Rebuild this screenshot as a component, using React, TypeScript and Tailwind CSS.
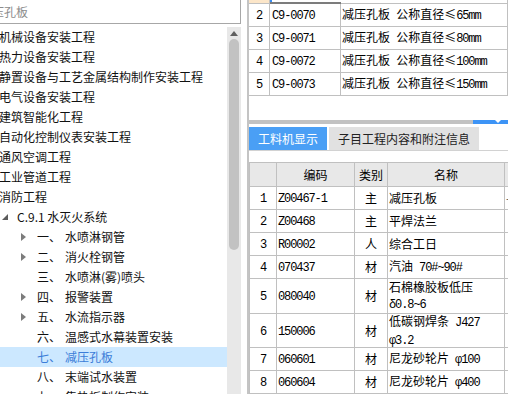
import React from 'react';

type TreeItem = { level: 0 | 1 | 2; num?: string; text: string; arrow?: boolean; active?: boolean };

const TREE: TreeItem[] = [
  { level: 0, text: '机械设备安装工程' },
  { level: 0, text: '热力设备安装工程' },
  { level: 0, text: '静置设备与工艺金属结构制作安装工程' },
  { level: 0, text: '电气设备安装工程' },
  { level: 0, text: '建筑智能化工程' },
  { level: 0, text: '自动化控制仪表安装工程' },
  { level: 0, text: '通风空调工程' },
  { level: 0, text: '工业管道工程' },
  { level: 0, text: '消防工程' },
  { level: 1, text: 'C.9.1 水灭火系统' },
  { level: 2, num: '一、', text: '水喷淋钢管', arrow: true },
  { level: 2, num: '二、', text: '消火栓钢管', arrow: true },
  { level: 2, num: '三、', text: '水喷淋(雾)喷头' },
  { level: 2, num: '四、', text: '报警装置', arrow: true },
  { level: 2, num: '五、', text: '水流指示器', arrow: true },
  { level: 2, num: '六、', text: '温感式水幕装置安装' },
  { level: 2, num: '七、', text: '减压孔板', active: true },
  { level: 2, num: '八、', text: '末端试水装置' },
  { level: 2, num: '九、', text: '集热板制作安装' },
];

const TOP_ROWS = [
  { n: '2', code: 'C9-0070', name: '减压孔板 公称直径≤65mm' },
  { n: '3', code: 'C9-0071', name: '减压孔板 公称直径≤80mm' },
  { n: '4', code: 'C9-0072', name: '减压孔板 公称直径≤100mm' },
  { n: '5', code: 'C9-0073', name: '减压孔板 公称直径≤150mm' },
];

const MAT_ROWS = [
  { n: '1', code: 'Z00467-1', type: '主', name: ['减压孔板'], h: 'h-[23px]', extra: '-' },
  { n: '2', code: 'Z00468', type: '主', name: ['平焊法兰'], h: 'h-[23px]' },
  { n: '3', code: 'R00002', type: '人', name: ['综合工日'], h: 'h-[23px]' },
  { n: '4', code: '070437', type: '材', name: ['汽油 70#~90#'], h: 'h-[23px]' },
  { n: '5', code: '080040', type: '材', name: ['石棉橡胶板低压', 'δ0.8~6'], h: 'h-[35px]' },
  { n: '6', code: '150006', type: '材', name: ['低碳钢焊条 J427', 'φ3.2'], h: 'h-[34px]' },
  { n: '7', code: '060601', type: '材', name: ['尼龙砂轮片 φ100'], h: 'h-[23px]' },
  { n: '8', code: '060604', type: '材', name: ['尼龙砂轮片 φ400'], h: 'h-[23px]' },
];

// ascii runs get the narrow mono face, like the half-width song glyphs
function Mixed({ text }: { text: string }) {
  const parts = text.split(/([\x20-\x7E\u03b4\u03c6]+)/);
  return (
    <span className="whitespace-pre">
      {parts.map((p, i) =>
        /^[\x20-\x7E\u03b4\u03c6]+$/.test(p) ? (
          <span key={i} className="font-['Liberation_Mono',monospace] text-[12px] tracking-[-1.1px]">{p}</span>
        ) : (
          <span key={i}>{p}</span>
        )
      )}
    </span>
  );
}

function TreeRow({ item }: { item: TreeItem }) {
  return (
    <div className={`flex items-center h-[20px] whitespace-nowrap ${item.active ? 'bg-[#cce8ff] text-[#3b7dd8]' : 'text-[#111]'}`}>
      {item.level === 0 && <span className="ml-[-1px]">{item.text}</span>}
      {item.level === 1 && (
        <>
          <svg width="6" height="6" viewBox="0 0 6 6" className="ml-[2px] mr-[9px]">
            <polygon points="6,0 6,6 0,6" fill="#5c5c5c" />
          </svg>
          <span>{item.text}</span>
        </>
      )}
      {item.level === 2 && (
        <>
          <span className="w-[37px] flex pl-[21px]">
            {item.arrow && (
              <svg width="5" height="8" viewBox="0 0 5 8">
                <polygon points="0,0 5,4 0,8" fill="#7c7c7c" />
              </svg>
            )}
          </span>
          <span className="w-[28px]">{item.num}</span>
          <span>{item.text}</span>
        </>
      )}
    </div>
  );
}

export default function App() {
  return (
    <div className="w-[508px] h-[394px] overflow-hidden bg-white flex font-['Noto_Sans_CJK_SC',sans-serif] text-[12px] leading-none">
      {/* left: search + tree */}
      <div className="w-[241px] flex flex-col shrink-0">
        <div className="h-[24px] border-b border-r border-[#a7a7a7] flex items-center text-[#8c8c8c] overflow-hidden whitespace-nowrap">
          <span className="ml-[-8px]">压孔板</span>
        </div>
        <div className="flex flex-1 mt-[3px] min-h-0">
          <div className="w-[227px] overflow-hidden">
            {TREE.map((t, i) => (
              <TreeRow key={i} item={t} />
            ))}
          </div>
          <div className="w-[14px] bg-[#e8e8e8] flex flex-col items-center">
            <svg width="8" height="5" viewBox="0 0 8 5" className="mt-[4px]">
              <polygon points="4,0 8,5 0,5" fill="#606060" />
            </svg>
            <div className="w-[10px] h-[211px] mt-[3px] rounded-[5px] bg-[#c2c2c2]" />
          </div>
        </div>
      </div>

      {/* right: list + detail tabs */}
      <div className="flex-1 pl-[6px] flex">
        <div className="flex-1 border-l-2 border-[#c4c4c4] flex flex-col">
          <div className="h-[128px] text-black">
            <div className="flex h-[4px]">
              <div className="w-[21px] bg-[#fce6c9] border-r border-b border-[#c0c0c0]" />
              <div className="w-[71px] border-b-2 border-[#7c7c7c] relative">
                <div className="absolute left-0 top-0 w-[2px] h-[2px] bg-[#3b8cf0]" />
              </div>
              <div className="w-[167px] border-r border-b border-[#c0c0c0]" />
            </div>
            {TOP_ROWS.map((r) => (
              <div key={r.n} className="flex h-[23px] border-b border-[#c0c0c0] w-[259px]">
                <div className="w-[21px] border-r border-[#c0c0c0] flex items-center justify-center">
                  <Mixed text={r.n} />
                </div>
                <div className="w-[71px] border-r border-[#c0c0c0] flex items-center pl-[2px]">
                  <Mixed text={r.code} />
                </div>
                <div className="w-[167px] border-r border-[#c0c0c0] flex items-center pl-[1px] whitespace-nowrap">
                  <Mixed text={r.name} />
                </div>
              </div>
            ))}
          </div>

          <div className="flex h-[4px]">
            <div className="flex-1 bg-[#c2c2c2]" />
            <div className="w-[37px] bg-[#3d94f6] flex justify-center items-start">
              <svg width="6" height="3" viewBox="0 0 6 3" className="ml-[12px]">
                <polygon points="0,0 6,0 3,3" fill="#ffffff" />
              </svg>
            </div>
          </div>

          <div className="mt-[3px] h-[25px] border-b border-[#d2d2d2] flex gap-[2px] items-start">
            <div className="w-[78px] h-[23px] bg-[#4a9ff5] text-white flex items-center justify-center">工料机显示</div>
            <div className="w-[150px] h-[23px] bg-[#e1e1e1] text-[#222] flex items-center justify-center">子目工程内容和附注信息</div>
          </div>

          <div className="mt-[11px] border-t border-l border-[#c0c0c0] text-black">
            <div className="flex h-[24px] bg-[#e8e8e8] border-b border-[#c0c0c0]">
              <div className="w-[27px] border-r border-[#c0c0c0]" />
              <div className="w-[78px] border-r border-[#c0c0c0] flex items-center justify-center">编码</div>
              <div className="w-[33px] border-r border-[#c0c0c0] flex items-center justify-center">类别</div>
              <div className="w-[117px] border-r border-[#c0c0c0] flex items-center justify-center">名称</div>
              <div className="flex-1" />
            </div>
            {MAT_ROWS.map((r) => (
              <div key={r.n} className={`flex ${r.h} border-b border-[#c0c0c0]`}>
                <div className="w-[27px] border-r border-[#c0c0c0] flex items-center justify-center">
                  <Mixed text={r.n} />
                </div>
                <div className="w-[78px] border-r border-[#c0c0c0] flex items-center pl-[1px]">
                  <Mixed text={r.code} />
                </div>
                <div className="w-[33px] border-r border-[#c0c0c0] flex items-center justify-center">{r.type}</div>
                <div className="w-[117px] border-r border-[#c0c0c0] flex flex-col justify-center pl-[1px] leading-[16px] whitespace-nowrap">
                  {r.name.map((line, i) => (
                    <div key={i}>
                      <Mixed text={line} />
                    </div>
                  ))}
                </div>
                <div className="flex-1 flex items-center pl-[1px] text-[#555]">{r.extra}</div>
              </div>
            ))}
          </div>
        </div>
      </div>
    </div>
  );
}
